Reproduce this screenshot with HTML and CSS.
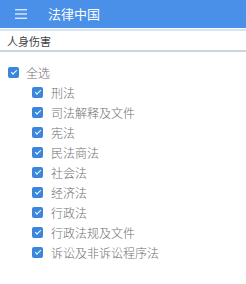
FILE: index.html
```html
<!DOCTYPE html>
<html lang="zh-CN">
<head>
  <meta charset="UTF-8">
  <meta name="viewport" content="width=device-width, initial-scale=1.0">
  <title>法律中国</title>
  <link rel="stylesheet" href="styles.css">
</head>
<body>

  <!-- Top bar -->
  <div class="top-bar">
    <svg class="menu-icon" width="12" height="10" viewBox="0 0 12 10">
      <rect x="0" y="0" width="12" height="1.4" fill="#dbe8fb"/>
      <rect x="0" y="4.3" width="12" height="1.4" fill="#dbe8fb"/>
      <rect x="0" y="8.6" width="12" height="1.4" fill="#dbe8fb"/>
    </svg>
    <span class="title">法律中国</span>
  </div>

  <!-- Search box -->
  <div class="search-box">
    <input type="text" id="search-input" value="人身伤害">
  </div>

  <!-- Category list -->
  <div class="category-list">
    <label class="check-row all">
      <span class="box"></span>全选
    </label>
    <label class="check-row child"><span class="box"></span>刑法</label>
    <label class="check-row child"><span class="box"></span>司法解释及文件</label>
    <label class="check-row child"><span class="box"></span>宪法</label>
    <label class="check-row child"><span class="box"></span>民法商法</label>
    <label class="check-row child"><span class="box"></span>社会法</label>
    <label class="check-row child"><span class="box"></span>经济法</label>
    <label class="check-row child"><span class="box"></span>行政法</label>
    <label class="check-row child"><span class="box"></span>行政法规及文件</label>
    <label class="check-row child"><span class="box"></span>诉讼及非诉讼程序法</label>
  </div>

</body>
</html>
```

FILE: styles.css
```css
body {
  font-family: "Noto Sans CJK SC", "Noto Sans", sans-serif;
  margin: 0;
  background-color: #fff;
}

.top-bar {
  height: 28px;
  background-color: #4a8fe8;
  display: flex;
  align-items: center;
  padding-left: 15px;
}

.menu-icon {
  display: block;
  margin-right: 21px;
}

.title {
  color: #fff;
  font-size: 13px;
  line-height: 1;
  margin-top: -2px;
}

.search-box {
  margin-top: 1px;
  border-top: 2px solid #d5e5f7;
  border-bottom: 2px solid #c9d4df;
}

.search-box input {
  display: block;
  width: 100%;
  box-sizing: border-box;
  height: 19px;
  border: none;
  outline: none;
  padding: 0 7px;
  font-family: inherit;
  font-size: 11px;
  color: #444;
  background: #fff;
}

.category-list {
  padding-top: 10px;
}

.check-row {
  display: flex;
  align-items: center;
  height: 20px;
  font-size: 12px;
  font-weight: 300;
  color: #707070;
}

.check-row.all {
  padding-left: 8px;
}

.check-row.child {
  padding-left: 32px;
}

.check-row .box {
  width: 11px;
  height: 11px;
  border-radius: 2px;
  background-color: #3a86dd;
  margin-right: 8px;
  position: relative;
}

.check-row.all .box {
  margin-right: 7px;
}

.check-row .box::after {
  content: "";
  position: absolute;
  left: 3px;
  top: 3px;
  width: 5px;
  height: 2px;
  border-left: 1.5px solid #fff;
  border-bottom: 1.5px solid #fff;
  transform: rotate(-45deg);
}
```
